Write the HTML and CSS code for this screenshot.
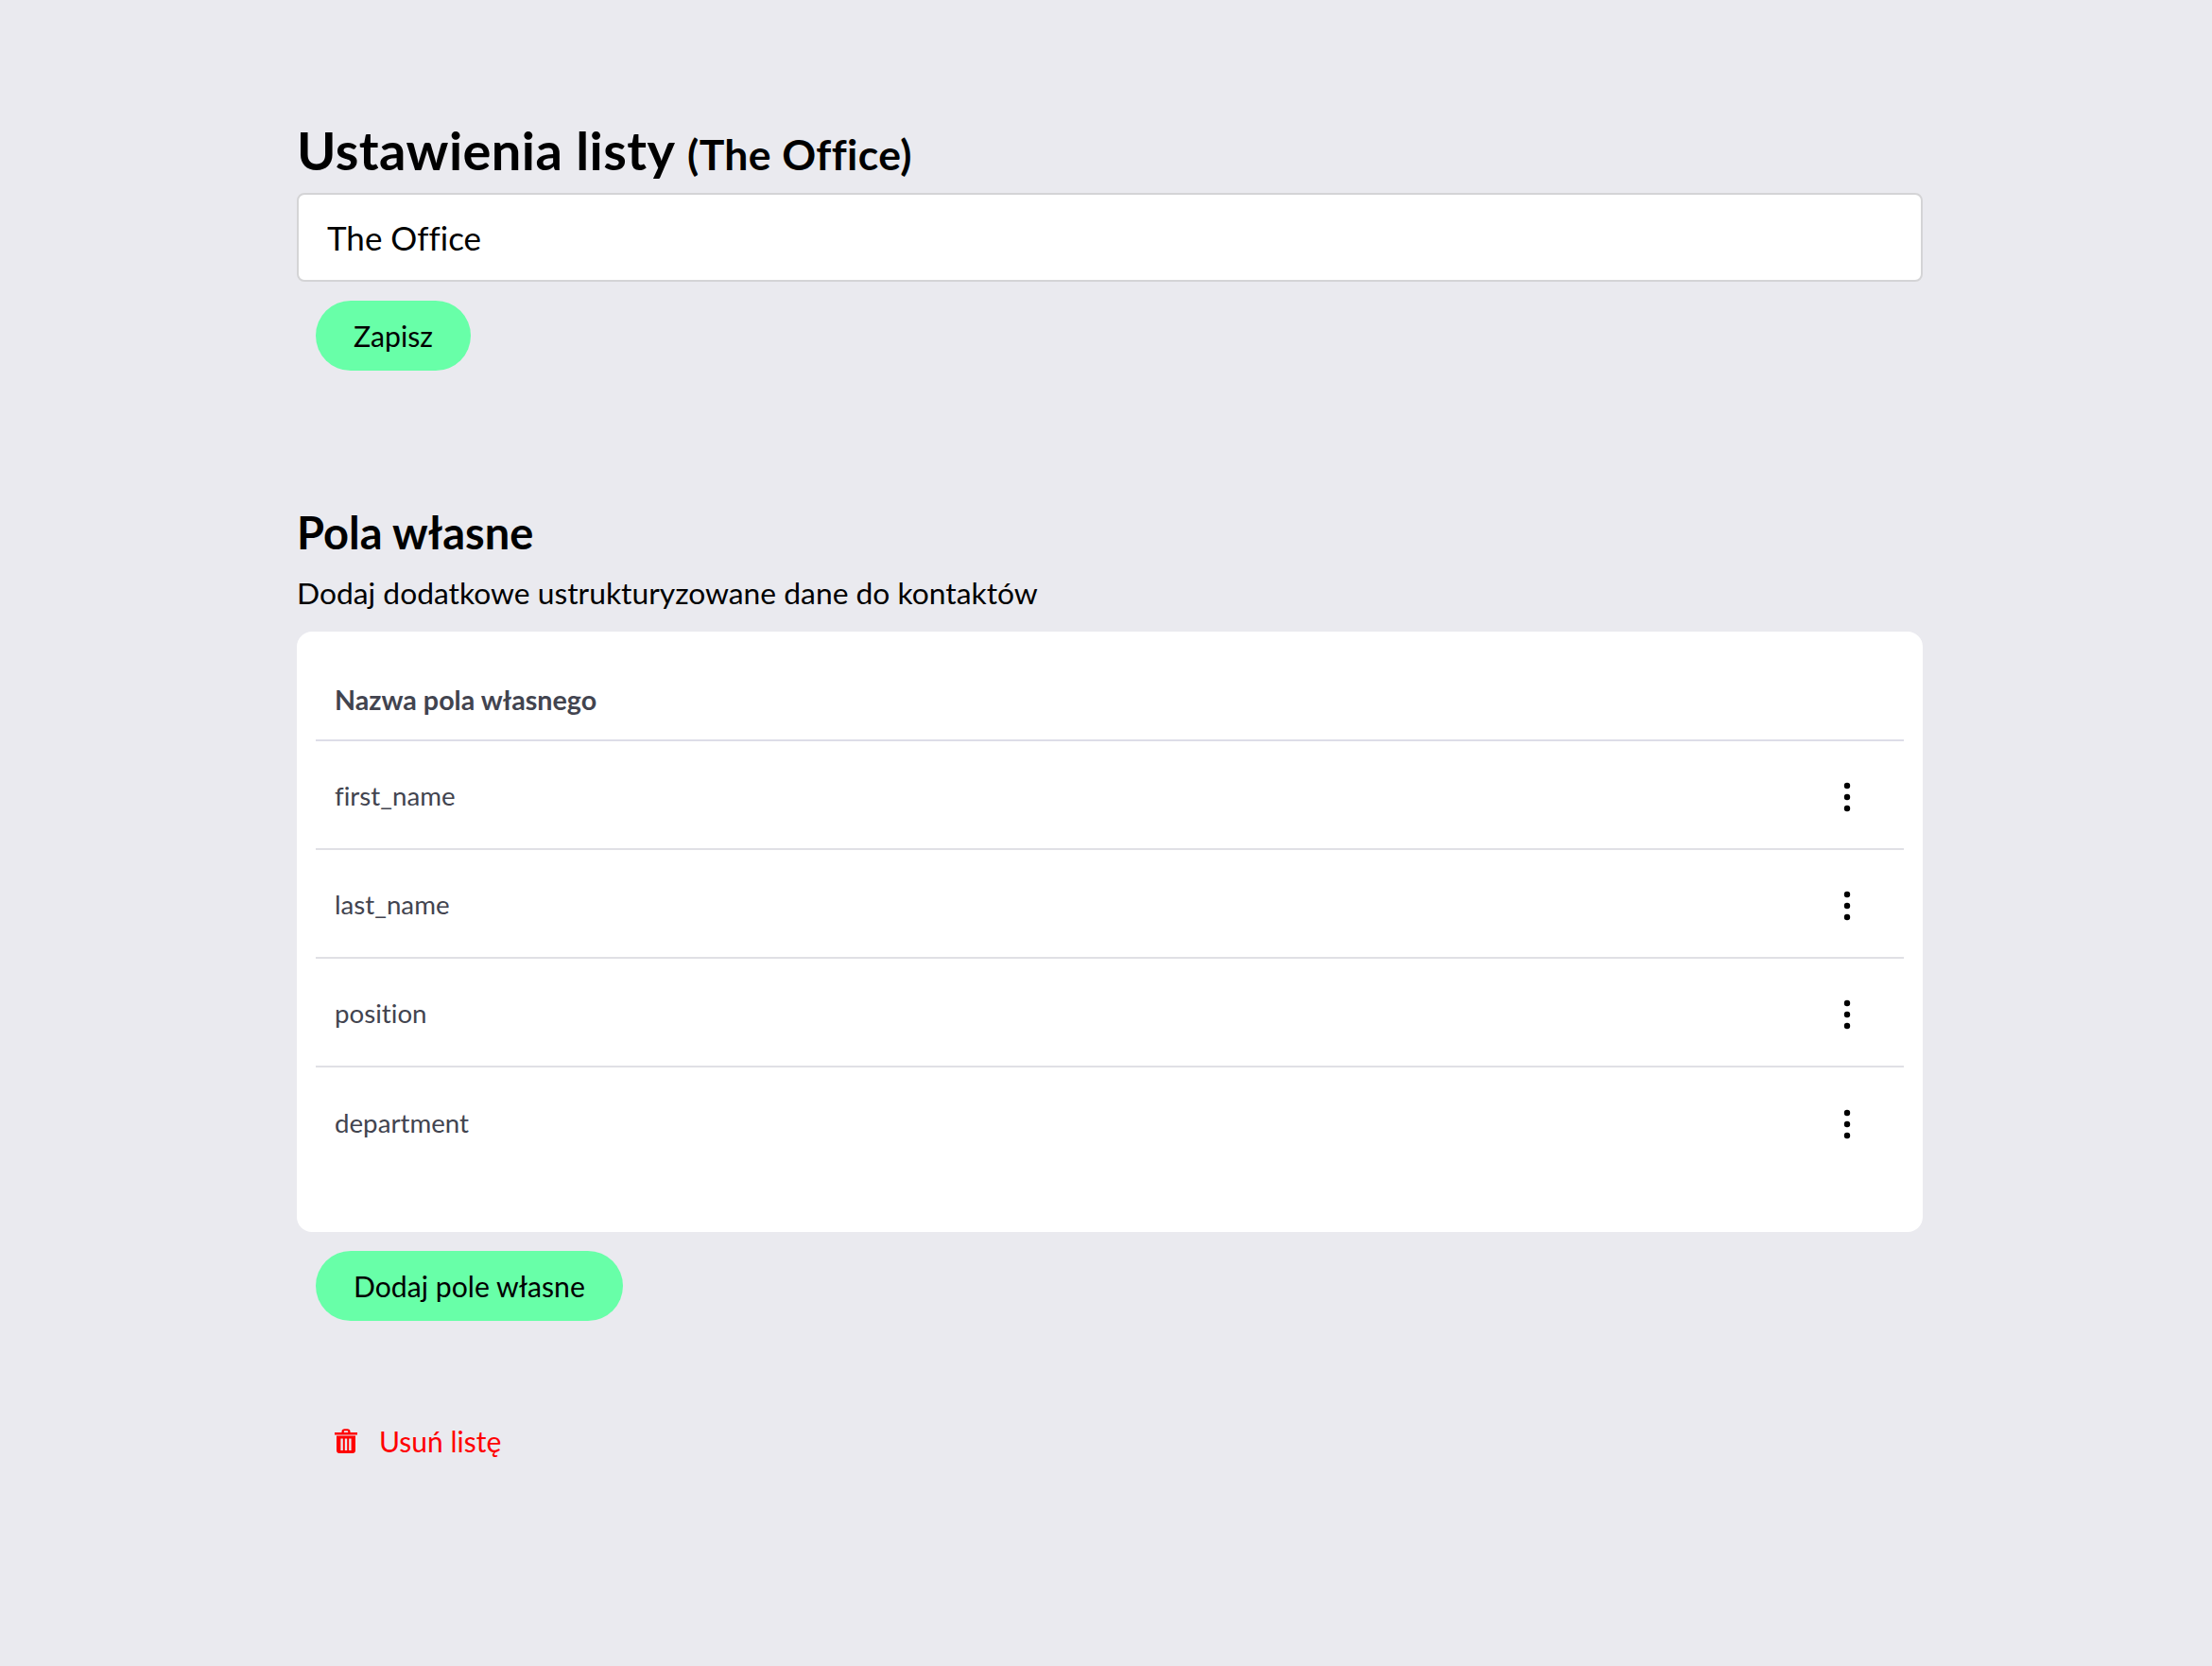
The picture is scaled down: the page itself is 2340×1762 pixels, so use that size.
FILE: index.html
```html
<!DOCTYPE html>
<html lang="pl">
<head>
<meta charset="utf-8">
<title>Ustawienia listy</title>
<link rel="stylesheet" href="styles.css">
</head>
<body>
<main class="page">
  <h1 class="title">Ustawienia listy <small class="title-sub">(The Office)</small></h1>
  <input class="name-input" type="text" value="The Office">
  <div class="actions"><button class="btn" type="button">Zapisz</button></div>

  <h2 class="section-title">Pola własne</h2>
  <p class="section-desc">Dodaj dodatkowe ustrukturyzowane dane do kontaktów</p>

  <section class="card">
    <div class="row row-head">Nazwa pola własnego</div>
    <div class="row">first_name<svg class="dots" viewBox="0 0 8 32"><circle cx="4" cy="4" r="3.2"/><circle cx="4" cy="16" r="3.2"/><circle cx="4" cy="28" r="3.2"/></svg></div>
    <div class="row">last_name<svg class="dots" viewBox="0 0 8 32"><circle cx="4" cy="4" r="3.2"/><circle cx="4" cy="16" r="3.2"/><circle cx="4" cy="28" r="3.2"/></svg></div>
    <div class="row">position<svg class="dots" viewBox="0 0 8 32"><circle cx="4" cy="4" r="3.2"/><circle cx="4" cy="16" r="3.2"/><circle cx="4" cy="28" r="3.2"/></svg></div>
    <div class="row">department<svg class="dots" viewBox="0 0 8 32"><circle cx="4" cy="4" r="3.2"/><circle cx="4" cy="16" r="3.2"/><circle cx="4" cy="28" r="3.2"/></svg></div>
  </section>
  <div class="actions"><button class="btn" type="button">Dodaj pole własne</button></div>

  <a class="delete" href="#">
    <svg class="trash" viewBox="0 0 24 26"><path fill="currentColor" d="M7.500 4V3C7.500 1.200 8.700.3 10.500.3h3C15.300.3 16.500 1.200 16.500 3v1H24v2.400H0V4zm2.300 0h4.400V3c0-.5-.3-.7-.8-.7h-2.800c-.5 0-.8.2-.8.700zM2 7.500h20V23c0 1.800-1.200 3-3 3H5c-1.800 0-3-1.200-3-3zm4.400 3V23h2.400V10.500zm4.400 0V23h2.400V10.500zm4.400 0V23h2.400V10.500z"/></svg>
    <span class="delete-label">Usuń listę</span>
  </a>
</main>
</body>
</html>
```
FILE: styles.css
```css
* { box-sizing: border-box; }
html, body { margin: 0; }
body {
  min-height: 1762px;
  background: #eaeaef;
  color: #000;
  font-family: "Lato", "Noto Sans", sans-serif;
  font-variant-ligatures: none;
}
.page {
  width: 1720px;
  margin-left: 314px;
  padding-top: 126px;
}
.title {
  margin: 0 0 8px;
  font-size: 56px;
  line-height: 66px;
  font-weight: 700;
  letter-spacing: 0.4px;
}
.title-sub { font-size: 44.500px; font-weight: 700; }
.name-input {
  display: block;
  width: 100%;
  height: 94px;
  padding: 0 30px;
  border: 2px solid #d4d4d6;
  border-radius: 8px;
  background: #fff;
  color: #000;
  font: 400 35px "Lato", sans-serif;
  font-variant-ligatures: none;
}
.actions { padding: 20px 20px 0; }
.btn {
  display: block;
  height: 74px;
  padding: 0 40px;
  border: 0;
  border-radius: 37px;
  background: #68ffa8;
  color: #000;
  font: 400 30.200px "Lato", sans-serif;
}
.section-title {
  margin: 144px 0 0;
  font-size: 47px;
  line-height: 54px;
  font-weight: 700;
}
.section-desc {
  margin: 15px 0 0;
  font-size: 31.800px;
  line-height: 44px;
}
.card {
  margin-top: 19px;
  height: 635px;
  padding: 0 20px;
  background: #fff;
  border-radius: 16px;
}
.row {
  display: flex;
  align-items: center;
  justify-content: space-between;
  height: 115px;
  padding: 1px 56px 0 20px;
  border-bottom: 2px solid #e0e0e5;
  color: #42444f;
  font-size: 27.700px;
}
.row:last-child { border-bottom: 0; }
.row-head {
  height: 116px;
  padding-top: 30px;
  border-bottom-color: #dddde8;
  font-size: 28.700px;
  font-weight: 700;
}
.dots { width: 8px; height: 32px; margin-top: 3px; fill: #000; }
.delete {
  display: flex;
  align-items: center;
  gap: 23px;
  margin: 105px 0 0 40px;
  color: #f00;
  font-size: 30px;
  line-height: 44px;
  text-decoration: none;
}
.trash { width: 24px; height: 26px; }
```
